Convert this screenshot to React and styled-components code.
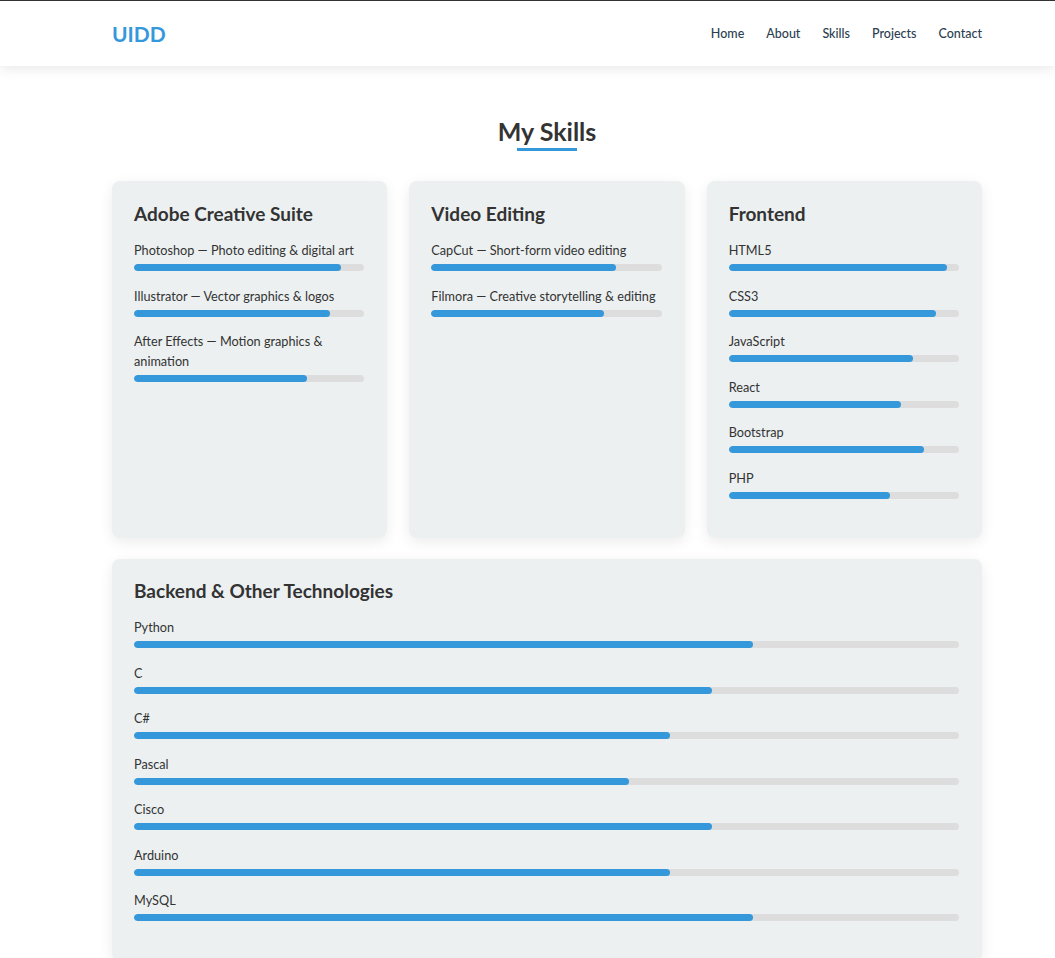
import React from "react";
import styled, { createGlobalStyle } from "styled-components";

const adobe = [
  { name: "Photoshop — Photo editing & digital art", level: 90 },
  { name: "Illustrator — Vector graphics & logos", level: 85 },
  { name: "After Effects — Motion graphics & animation", level: 75 },
];

const video = [
  { name: "CapCut — Short-form video editing", level: 80 },
  { name: "Filmora — Creative storytelling & editing", level: 75 },
];

const frontend = [
  { name: "HTML5", level: 95 },
  { name: "CSS3", level: 90 },
  { name: "JavaScript", level: 80 },
  { name: "React", level: 75 },
  { name: "Bootstrap", level: 85 },
  { name: "PHP", level: 70 },
];

const backend = [
  { name: "Python", level: 75 },
  { name: "C", level: 70 },
  { name: "C#", level: 65 },
  { name: "Pascal", level: 60 },
  { name: "Cisco", level: 70 },
  { name: "Arduino", level: 65 },
  { name: "MySQL", level: 75 },
];

const SkillList = ({ items }) =>
  items.map((s) => (
    <Skill key={s.name}>
      <Label>{s.name}</Label>
      <Track>
        <Fill style={{ width: `${s.level}%` }} />
      </Track>
    </Skill>
  ));

const App = () => (
  <>
    <GlobalStyle />
    <Header>
      <HeaderInner>
        <Logo>UIDD</Logo>
        <Nav>
          <NavLink href="#">Home</NavLink>
          <NavLink href="#">About</NavLink>
          <NavLink href="#">Skills</NavLink>
          <NavLink href="#">Projects</NavLink>
          <NavLink href="#">Contact</NavLink>
        </Nav>
      </HeaderInner>
    </Header>
    <Section>
      <Title>My Skills</Title>
      <Grid>
        <Card>
          <CardTitle>Adobe Creative Suite</CardTitle>
          <SkillList items={adobe} />
        </Card>
        <Card>
          <CardTitle>Video Editing</CardTitle>
          <SkillList items={video} />
        </Card>
        <Card>
          <CardTitle>Frontend</CardTitle>
          <SkillList items={frontend} />
        </Card>
        <Card $wide>
          <CardTitle>Backend &amp; Other Technologies</CardTitle>
          <SkillList items={backend} />
        </Card>
      </Grid>
    </Section>
  </>
);

export default App;

const GlobalStyle = createGlobalStyle`
  body {
    margin: 0;
    background: #fff;
    color: #333;
    font-family: Lato, "Noto Sans", sans-serif;
    border-top: 1px solid #333;
  }
`;

const Header = styled.header`
  background: #fff;
  box-shadow: 0 2px 12px rgba(0, 0, 0, 0.1);
  position: relative;
`;

const HeaderInner = styled.div`
  width: 870px;
  margin-left: 112px;
  height: 65px;
  display: flex;
  align-items: center;
  justify-content: space-between;
`;

const Logo = styled.div`
  color: #3498db;
  font-size: 21px;
  font-weight: 700;
`;

const Nav = styled.nav`
  display: flex;
  gap: 22px;
`;

const NavLink = styled.a`
  color: #2c3e50;
  font-size: 12.5px;
  font-weight: 500;
  text-decoration: none;
`;

const Section = styled.section`
  width: 870px;
  margin-left: 112px;
  padding-top: 51px;
`;

const Title = styled.h2`
  text-align: center;
  font-size: 25px;
  font-weight: 700;
  color: #333;
  margin: 0 0 30px;
  line-height: 28px;
  position: relative;
  padding-bottom: 6px;

  &::after {
    content: "";
    position: absolute;
    left: 50%;
    bottom: 0;
    width: 60px;
    height: 3px;
    margin-left: -30px;
    background: #3498db;
  }
`;

const Grid = styled.div`
  display: grid;
  grid-template-columns: repeat(3, 1fr);
  column-gap: 22px;
  row-gap: 21px;
`;

const Card = styled.div`
  grid-column: ${(p) => (p.$wide ? "1 / -1" : "auto")};
  background: #ecf0f1;
  border-radius: 8px;
  box-shadow: 0 4px 14px rgba(0, 0, 0, 0.08);
  padding: ${(p) => (p.$wide ? "20px" : "21px")} 23px 25px 22px;
`;

const CardTitle = styled.h3`
  margin: 0 0 14px;
  font-size: 19px;
  font-weight: 700;
  line-height: 24px;
  color: #333;
`;

const Skill = styled.div`
  margin-bottom: 14.5px;
`;

const Label = styled.div`
  font-size: 12.7px;
  line-height: 20px;
  color: #333;
  margin-bottom: 4px;
`;

const Track = styled.div`
  height: 7px;
  background: #ddd;
  border-radius: 4px;
  overflow: hidden;
`;

const Fill = styled.div`
  height: 100%;
  background: #3498db;
  border-radius: 4px;
`;
